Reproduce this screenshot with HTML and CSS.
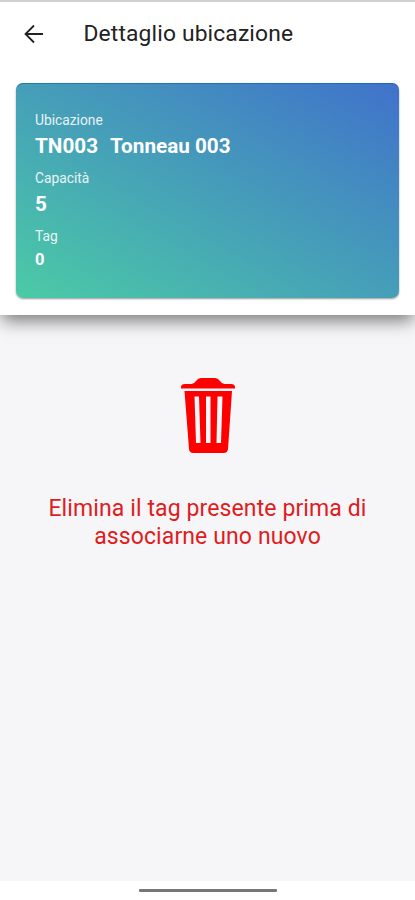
FILE: index.html
```html
<!DOCTYPE html>
<html lang="it">
<head>
<meta charset="utf-8">
<title>Dettaglio ubicazione</title>
<link rel="stylesheet" href="styles.css">
</head>
<body>
<section class="top">
  <header class="bar">
    <svg class="back" viewBox="0 0 20 20"><path d="M19 10H1.800M10 1.500L1.500 10L10 18.500"/></svg>
    <h1 class="title">Dettaglio ubicazione</h1>
  </header>
  <div class="card">
    <div class="label">Ubicazione</div>
    <div class="value"><span>TN003</span><span>Tonneau 003</span></div>
    <div class="label">Capacità</div>
    <div class="value">5</div>
    <div class="label">Tag</div>
    <div class="value small">0</div>
  </div>
</section>
<main class="content">
  <svg class="trash" viewBox="0 0 54 76"><path class="fill" d="M0 10.500V9Q0 6 4 6H10.500Q13 6 15 3Q17 0 20 0H34Q37 0 39 3Q41 6 43.500 6H50Q54 6 54 9V10.500Z"/><path class="fill" fill-rule="evenodd" d="M3.500 13H51L47 71Q46.600 75 42.500 75H12.500Q8.300 75 8 71ZM13.500 18.500L15 65H19.500L18 18.500ZM25 18.500V65H29.500V18.500ZM36.500 18.500L35.500 65H40L41.500 18.500Z"/></svg>
  <p class="message">Elimina il tag presente prima di<br>associarne uno nuovo</p>
</main>
<footer class="nav"><div class="handle"></div></footer>
</body>
</html>
```
FILE: styles.css
```css
* { box-sizing: border-box; }
body {
  margin: 0;
  height: 900px;
  display: flex;
  flex-direction: column;
  overflow: hidden;
  background: #f6f6f9;
  font-family: Roboto, "Liberation Sans", sans-serif;
}
.top {
  height: 315px;
  padding: 0 16px;
  border-top: 2px solid #d0d0d0;
  background: #fff;
  box-shadow: 0 8px 16px -2px rgba(0, 0, 0, .5);
}
.bar { height: 81px; padding: 0 0 17px 8px; display: flex; align-items: center; gap: 39.500px; }
.back { width: 20px; height: 20px; fill: none; stroke: #222; stroke-width: 1.800; }
.title { margin: 0; font-size: 22.800px; line-height: 28px; font-weight: 400; letter-spacing: .15px; color: #222; }
.card {
  height: 215px;
  padding: 27px 19px;
  border-radius: 7px;
  background: linear-gradient(to top right, #4bcba6, #4072cb);
  box-shadow: 0 1px 2px rgba(0, 0, 0, .4), inset 0 1px 0 rgba(0, 90, 170, .5);
  color: #fff;
}
.label { height: 20px; font-size: 13.800px; line-height: 20px; letter-spacing: 0; opacity: .88; }
.value { display: flex; gap: 12px; height: 38px; padding-top: 1px; font-size: 20.700px; line-height: 30px; font-weight: 700; }
.small { font-size: 16.500px; line-height: 25px; }
.content { flex: 1; display: flex; flex-direction: column; align-items: center; padding-top: 63px; }
.trash { width: 54px; height: 76px; }
.fill { fill: #f00; }
.message { margin: 41px 0 0; text-align: center; font-size: 23px; line-height: 28px; letter-spacing: .11px; color: #e01c1c; }
.nav { height: 19px; padding-top: 8px; background: #fff; }
.handle { width: 138px; height: 3px; margin: 0 auto; border-radius: 1px; background: #777; }
```
